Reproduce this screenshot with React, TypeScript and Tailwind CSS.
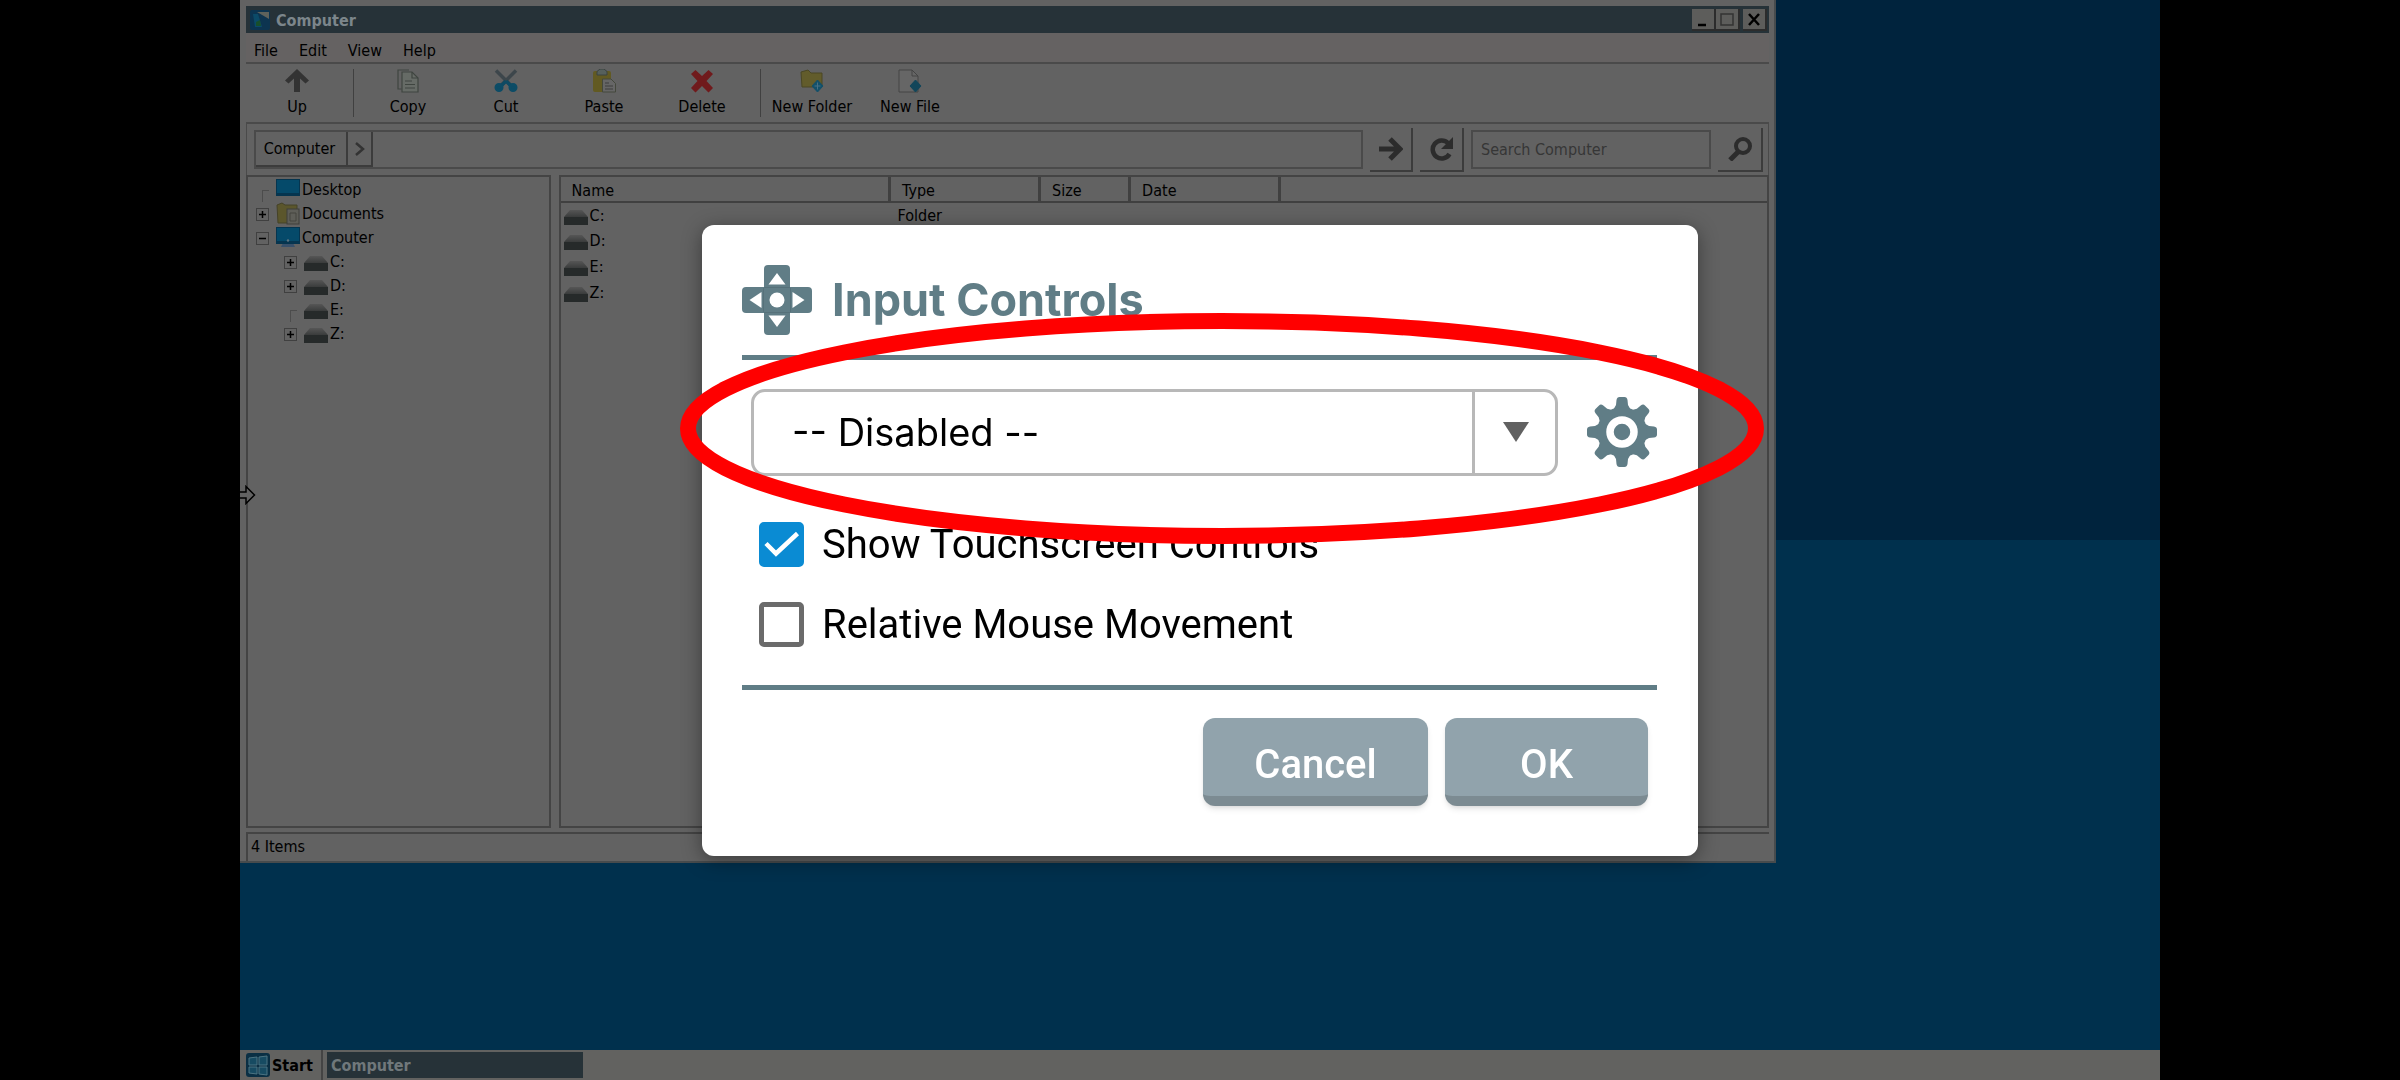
import { useState } from 'react';
import type { ReactNode } from 'react';

const DRIVES = ['C:', 'D:', 'E:', 'Z:'];
const MENUS = ['File', 'Edit', 'View', 'Help'];

const FILES = [
  { name: 'C:', type: 'Folder' },
  { name: 'D:', type: '' },
  { name: 'E:', type: '' },
  { name: 'Z:', type: '' },
];

const UpIcon = () => (
  <svg className="w-6 h-6" viewBox="0 0 24 24">
    <path d="M12 0 24 11.500 20.500 14.500 15 9.500V23H9V9.500L3.500 14.500 0 11.500Z" fill="#333" />
  </svg>
);

const CopyIcon = () => (
  <svg className="w-6 h-6" viewBox="0 0 24 24" fill="none" stroke="#3f4540" strokeWidth="1.2">
    <path d="M5.500 20H2V1h11" />
    <path d="M6 3h10l6 6v14H6Z" fill="#666b66" />
    <path d="M16 3v6h6M9 12h7M9 15.500h10M9 19h10" />
  </svg>
);

const CutIcon = () => (
  <svg className="w-6 h-6" viewBox="0 0 24 24" fill="none">
    <path d="M2 1.500 17 16.500M22 1.500 7 16.500" stroke="#3d464b" strokeWidth="3.500" />
    <path d="M12 12 5.500 18.500M12 12l6.500 6.500" stroke="#0d4a63" strokeWidth="3.500" />
    <circle cx="5" cy="18.500" r="3" fill="#0c4c66" stroke="#0c4c66" strokeWidth="3" />
    <circle cx="19" cy="18.500" r="3" fill="#0c4c66" stroke="#0c4c66" strokeWidth="3" />
  </svg>
);

const PasteIcon = () => (
  <svg className="w-6 h-6" viewBox="0 0 24 24">
    <rect x="1" y="2" width="18" height="21" rx="2" fill="#625a22" />
    <path d="M5 6V2.500L8 0h4l3 2.500V6Z" fill="#56605c" stroke="#3b4340" />
    <path d="M10.500 10H19l4.500 4.500V23h-13Z" fill="#666" stroke="#44483c" />
    <path d="M13 14h4M13 17h8M13 20h8" stroke="#3c3c3c" strokeWidth="1.200" />
  </svg>
);

const DeleteIcon = () => (
  <svg className="w-6 h-6" viewBox="0 0 24 24">
    <path d="M1 5 5.500 1 12 7 18.500 1 23 5 16.500 12 23 19 18.500 23.500 12 17 5.500 23.500 1 19 7.500 12Z" fill="#701a1c" />
  </svg>
);

const NewFolderIcon = () => (
  <svg className="w-6 h-6" viewBox="0 0 24 24">
    <path d="M1 3 8 1l3 3h11v14H2Z" fill="#625c2b" stroke="#4a4725" />
    <path d="m17.500 11 5.500 6-5.500 6-5.500-6Z" fill="#12506a" stroke="#12506a" strokeLinejoin="round" />
    <path d="M17.500 13.500v7M14.500 17h6" stroke="#467084" />
  </svg>
);

const NewFileIcon = () => (
  <svg className="w-6 h-6" viewBox="0 0 24 24">
    <path d="M1 1h13l6 6v16H1Z" fill="#666" stroke="#444" />
    <path d="M14 1v6h6" fill="none" stroke="#444" />
    <path d="m17.500 11 5.500 6-5.500 6-5.500-6Z" fill="#12465a" stroke="#12465a" strokeLinejoin="round" />
  </svg>
);

const MonitorIcon = ({ stand = false }: { stand?: boolean }) => (
  <svg className="w-6 h-6 shrink-0" viewBox="0 0 24 24">
    {stand && <path d="M7 17h10l2 4H5Z" fill="#38506a" />}
    <rect y="1" width="24" height="17" fill="#06354f" />
    <rect x="1" y="2" width="22" height="13" fill="#054a6a" />
    {stand && <circle cx="12" cy="14.500" r="1.200" fill="#5d7380" />}
  </svg>
);

const DocumentsIcon = () => (
  <svg className="w-6 h-6 shrink-0" viewBox="0 0 24 24">
    <path d="M1 3 6 1l3 2h12v18H2Z" fill="#5b562c" stroke="#454228" />
    <rect x="11" y="7" width="12" height="15" fill="#5e5e58" stroke="#3e3e3a" />
    <path d="M14 11h6v8h-6z" fill="none" stroke="#44443f" />
  </svg>
);

const DriveIcon = () => (
  <svg className="w-6 h-6 shrink-0" viewBox="0 0 24 24">
    <defs>
      <linearGradient id="driveTop" x1="0" y1="0" x2="0" y2="1">
        <stop offset="0" stopColor="#565656" />
        <stop offset="1" stopColor="#3a3c3c" />
      </linearGradient>
    </defs>
    <path d="M6 6h12l6 7H0Z" fill="url(#driveTop)" />
    <rect y="13" width="24" height="8" fill="#262a2a" />
  </svg>
);

const DpadIcon = () => (
  <svg className="w-[70px] h-[70px]" viewBox="0 0 70 70">
    <rect x="22" width="26" height="70" rx="4" fill="#607d86" />
    <rect y="22" width="70" height="26" rx="4" fill="#607d86" />
    <path d="M35 8l8.500 11.500h-17ZM35 62l8.500-11.500h-17ZM7.500 35 19.500 27v16ZM62.500 35 50.500 27v16Z" fill="#fff" />
    <path d="M22 22.500h26M22 47.500h26M21.500 23v24M48.500 23v24" stroke="#56717a" />
    <circle cx="35" cy="35" r="7.500" fill="#fff" />
  </svg>
);

const GearIcon = () => (
  <svg className="w-[70px] h-[70px]" viewBox="-35 -35 70 70">
    <g fill="#607d86">
      {[0, 45, 90, 135, 180, 225, 270, 315].map((angle) => (
        <path
          key={angle}
          transform={`rotate(${angle})`}
          d="M-10-20 -6-27 -5.500-32Q-5-35-2.500-35H2.500Q5-35 5.500-32L6-27 10-20Z"
        />
      ))}
      <circle r="25" />
    </g>
    <circle r="12" fill="#607d86" stroke="#fff" strokeWidth="7.500" />
  </svg>
);

const ToolButton = ({ icon, label }: { icon: ReactNode; label: string }) => (
  <button type="button" className="w-[98px] flex flex-col items-center gap-1 whitespace-nowrap">
    {icon}
    {label}
  </button>
);

const Expander = ({ open = false }: { open?: boolean }) => (
  <button
    type="button"
    aria-label={open ? 'Collapse' : 'Expand'}
    className="w-[13px] h-[13px] shrink-0 border border-[#404040] flex items-center justify-center"
  >
    <svg className="w-[9px] h-[9px]" viewBox="0 0 9 9" stroke="#000" strokeWidth="1.500">
      <path d={open ? 'M1 4.500h7' : 'M1 4.500h7M4.500 1v7'} />
    </svg>
  </button>
);

const Branch = () => (
  <span className="w-[13px] h-3 shrink-0 self-end flex justify-end">
    <span className="w-[7px] h-3 border-l border-t border-[#4c4c4c]" />
  </span>
);

const TreeItem = ({ toggle, icon, label, child = false }: { toggle: ReactNode; icon: ReactNode; label: string; child?: boolean }) => (
  <li className={child ? 'h-6 flex items-center pl-9' : 'h-6 flex items-center pl-2'}>
    {toggle}
    <span className="w-[7px]" />
    {icon}
    <span className="ml-[2px]">{label}</span>
  </li>
);

const FileManager = () => (
  <section className="w-4/5 bg-[#626262] border-r-2 border-b-2 border-[#474b4d] pt-[6px] pl-[6px] pr-[5px] text-black">
    <header className="h-[27px] bg-[#263238] flex items-center pl-1 pr-[2px]">
      <svg className="w-5 h-5" viewBox="0 0 20 20">
        <rect width="20" height="20" rx="2" fill="#0c3450" />
        <path d="M7 2h12v7Z" fill="#5d625c" />
        <path d="M3 4h5l4 13H5Z" fill="#0b4a68" />
        <path d="M6 12l4-2 1 6H6Z" fill="#174f2c" />
      </svg>
      <h1 className="ml-[6px] pt-[2px] flex-1 font-bold text-[#7c868b]">Computer</h1>
      <div className="flex">
        <button type="button" aria-label="Minimize" className="w-6 h-[22px] bg-[#5d5d5b] border-r-2 border-b-2 border-[#2c2c2c]">
          <svg className="w-full h-full" viewBox="0 0 22 20"><path d="M6 16h8" stroke="#000" strokeWidth="2.500" /></svg>
        </button>
        <button type="button" aria-label="Maximize" className="w-6 h-[22px] mr-[3px] bg-[#5d5d5b] border-r-2 border-b-2 border-[#2c2c2c]">
          <svg className="w-full h-full" viewBox="0 0 22 20"><path d="M5 5h12v11H5Z" stroke="#333" strokeWidth="1.500" fill="none" /></svg>
        </button>
        <button type="button" aria-label="Close" className="w-6 h-[22px] bg-[#5d5d5b] border-r-2 border-b-2 border-[#2c2c2c]">
          <svg className="w-full h-full" viewBox="0 0 22 20"><path d="m6 5 10 11M16 5 6 16" stroke="#000" strokeWidth="2.500" /></svg>
        </button>
      </div>
    </header>

    <nav className="h-[31px] bg-[#656262] border-b-2 border-[#4a4a4a] flex items-center gap-[21px] pl-2 pt-[6px]">
      {MENUS.map((menu) => (
        <button key={menu} type="button">{menu}</button>
      ))}
    </nav>

    <div className="h-[58px] flex items-center pl-[2px]">
      <ToolButton icon={<UpIcon />} label="Up" />
      <span className="w-px h-12 ml-[7px] mr-[5px] bg-[#404040]" />
      <ToolButton icon={<CopyIcon />} label="Copy" />
      <ToolButton icon={<CutIcon />} label="Cut" />
      <ToolButton icon={<PasteIcon />} label="Paste" />
      <ToolButton icon={<DeleteIcon />} label="Delete" />
      <span className="w-px h-12 ml-[9px] mr-[2px] bg-[#404040]" />
      <ToolButton icon={<NewFolderIcon />} label="New Folder" />
      <ToolButton icon={<NewFileIcon />} label="New File" />
    </div>

    <div className="h-[53px] border-t-2 border-x border-[#4a4a4a] flex items-center gap-[7px] pl-[7px] pr-[5px]">
      <div className="flex-1 h-[39px] border-2 border-[#4a4a4a] flex items-start">
        <button type="button" className="h-[35px] w-[92px] pr-[3px] border-r-2 border-b-2 border-[#3c3c3c]">Computer</button>
        <button type="button" aria-label="Show folders" className="h-[35px] w-[25px] border-r-2 border-b-2 border-[#3c3c3c] flex items-center justify-center">
          <svg className="w-3 h-4" viewBox="0 0 12 16"><path d="m2 2 7 6-7 6" fill="none" stroke="#333" strokeWidth="2.500" /></svg>
        </button>
      </div>
      <button type="button" aria-label="Go" className="w-[43px] h-[44px] border-r-2 border-b-2 border-[#3c3c3c] flex items-center justify-center">
        <svg className="w-6 h-6" viewBox="0 0 24 24"><path d="M0 12h21M11 2l10 10-10 10" fill="none" stroke="#2c2c2c" strokeWidth="5" /></svg>
      </button>
      <button type="button" aria-label="Refresh" className="w-[44px] h-[44px] border-r-2 border-b-2 border-[#3c3c3c] flex items-center justify-center">
        <svg className="w-6 h-6" viewBox="0 0 24 24">
          <path d="M19 6A9 9 0 1 0 20.500 17" fill="none" stroke="#2c2c2c" strokeWidth="4.500" />
          <path d="M24 0v12H12Z" fill="#2c2c2c" />
        </svg>
      </button>
      <input
        type="text"
        aria-label="Search Computer"
        placeholder="Search Computer"
        className="w-[240px] h-[39px] border-2 border-[#4a4a4a] pl-2 placeholder:text-[#363636] placeholder:opacity-100"
      />
      <button type="button" aria-label="Search" className="w-[45px] h-[44px] border-r-2 border-b-2 border-[#3c3c3c] flex items-center justify-center">
        <svg className="w-6 h-6" viewBox="0 0 24 24" fill="none" stroke="#2c2c2c">
          <circle cx="15" cy="9" r="7" strokeWidth="4" />
          <path d="m10 15-8 8" strokeWidth="5" />
        </svg>
      </button>
    </div>

    <div className="h-[653px] flex gap-2">
      <ul className="w-1/5 border-2 border-[#444] pt-px">
        <TreeItem toggle={<Branch />} icon={<MonitorIcon />} label="Desktop" />
        <TreeItem toggle={<Expander />} icon={<DocumentsIcon />} label="Documents" />
        <TreeItem toggle={<Expander open />} icon={<MonitorIcon stand />} label="Computer" />
        {DRIVES.map((drive) => (
          <TreeItem
            key={drive}
            child
            toggle={drive === 'E:' ? <Branch /> : <Expander />}
            icon={<DriveIcon />}
            label={drive}
          />
        ))}
      </ul>
      <div className="flex-1 border-2 border-[#444]">
        <table className="w-full table-fixed text-left">
          <colgroup>
            <col className="w-[329px]" />
            <col className="w-[150px]" />
            <col className="w-[90px]" />
            <col className="w-[150px]" />
            <col />
          </colgroup>
          <thead>
            <tr className="h-[25px] border-b-2 border-[#404040]">
              {['Name', 'Type', 'Size', 'Date'].map((column) => (
                <th key={column} className="border-r-3 border-[#404040] pl-[11px] pt-1 font-normal">{column}</th>
              ))}
              <th />
            </tr>
          </thead>
          <tbody>
            {FILES.map((file) => (
              <tr key={file.name} className="h-[26px]">
                <td className="pl-[3px]">
                  <span className="flex items-center gap-[2px]"><DriveIcon />{file.name}</span>
                </td>
                <td className="pl-2">{file.type}</td>
                <td />
                <td />
                <td />
              </tr>
            ))}
          </tbody>
        </table>
      </div>
    </div>

    <footer className="h-[29px] mt-1 border-t-2 border-l-2 border-[#444] pl-[3px] pb-[2px] flex items-center">4 Items</footer>
  </section>
);

const Taskbar = () => (
  <footer className="h-[30px] bg-[#626260] flex items-center pl-[6px] font-bold">
    <button type="button" className="h-full flex items-center gap-[2px] pr-2 border-r-2 border-[#444] text-black">
      <svg className="w-6 h-6" viewBox="0 0 24 24">
        <rect width="24" height="24" rx="3" fill="#0a2f44" />
        <path d="M3 5l8-1v8H3ZM13 4l8-1v9h-8ZM3 14h8v7l-8-1ZM13 14h8v8l-8-1Z" fill="#174b62" stroke="#4d7482" />
      </svg>
      <span className="pt-[2px]">Start</span>
    </button>
    <button type="button" className="ml-1 w-[256px] h-[26px] bg-[#263238] pl-1 pt-[2px] text-left text-[#70787b]">Computer</button>
  </footer>
);

type CheckRowProps = { label: string; checked: boolean; onChange: (checked: boolean) => void };

const CheckRow = ({ label, checked, onChange }: CheckRowProps) => (
  <label className="h-20 flex items-center gap-[18px] pl-[17px] text-[40px]">
    <span className="grid w-[45px] h-[45px]">
      <input
        type="checkbox"
        checked={checked}
        onChange={(e) => onChange(e.target.checked)}
        className="col-start-1 row-start-1 appearance-none rounded-[5px] border-5 border-[#6b6b6b] checked:border-[#0a8bd3] checked:bg-[#0a8bd3]"
      />
      {checked && (
        <svg className="col-start-1 row-start-1 pointer-events-none" viewBox="0 0 45 45">
          <path d="m7 21.500 10 10L38.500 11.500" fill="none" stroke="#fff" strokeWidth="4.500" />
        </svg>
      )}
    </span>
    {label}
  </label>
);

const InputControlsDialog = () => {
  const [showTouch, setShowTouch] = useState(true);
  const [relativeMouse, setRelativeMouse] = useState(false);

  return (
    <div className="fixed inset-0 flex items-center justify-center">
      <div
        role="dialog"
        aria-labelledby="dialog-title"
        className="relative w-[996px] max-w-full rounded-[12px] bg-white pl-10 pr-[41px] pt-10 pb-[50px] text-black shadow-[0_4px_20px_rgba(0,0,0,0.4)] font-['Roboto',sans-serif]"
      >
        <div className="flex items-center gap-5 pb-5 border-b-5 border-[#607d86]">
          <DpadIcon />
          <h2 id="dialog-title" className="font-['Inter',sans-serif] text-[45px] leading-[52px] font-bold text-[#607d86]">Input Controls</h2>
        </div>

        <div className="my-[29px] flex items-center justify-between pl-[9px]">
          <div className="grid w-[807px]">
            <select
              aria-label="Profile"
              className="col-start-1 row-start-1 h-[87px] appearance-none rounded-[14px] border-3 border-[#b8b8b8] bg-white pl-[38px] font-['Inter',sans-serif] text-[38px] leading-[48px]"
            >
              <option>-- Disabled --</option>
            </select>
            <span className="col-start-1 row-start-1 justify-self-end w-[86px] border-l-3 border-[#b8b8b8] pr-[2px] pointer-events-none flex items-center justify-center">
              <svg className="w-[26px] h-5" viewBox="0 0 26 20"><path d="M0 0h26L13 20Z" fill="#616161" /></svg>
            </span>
          </div>
          <button type="button" aria-label="Settings"><GearIcon /></button>
        </div>

        <CheckRow label="Show Touchscreen Controls" checked={showTouch} onChange={setShowTouch} />
        <CheckRow label="Relative Mouse Movement" checked={relativeMouse} onChange={setRelativeMouse} />

        <div className="mt-5 pt-7 pr-[9px] flex justify-end gap-[17px] border-t-5 border-[#607d86] text-[40px] font-medium text-white">
          <button type="button" className="w-[225px] h-[88px] pt-4 rounded-[12px] border-b-10 border-[#7c8b92] bg-[#91a3ac] shadow-md">Cancel</button>
          <button type="button" className="w-[203px] h-[88px] pt-4 rounded-[12px] border-b-10 border-[#7c8b92] bg-[#91a3ac] shadow-md">OK</button>
        </div>

        <svg
          className="absolute -left-[22px] top-[88px] w-[1084px] h-[231px] pointer-events-none"
          viewBox="0 0 1084 231"
          fill="none"
        >
          <ellipse cx="542" cy="115.500" rx="534" ry="107.500" stroke="#f00" strokeWidth="16" />
        </svg>
      </div>
    </div>
  );
};

export default function App() {
  return (
    <div className="min-h-screen bg-black flex justify-center text-[16px] leading-5 font-['DejaVu_Sans_Condensed','DejaVu_Sans',sans-serif]">
      <div className="relative w-4/5 min-h-screen flex flex-col bg-[linear-gradient(#00233d_50%,#00304d_50%)]">
        <main className="flex-1">
          <FileManager />
        </main>
        <Taskbar />
        <svg className="absolute left-0 top-[485px] w-4 h-5" viewBox="0 0 16 20">
          <path d="M0 7h6V1.500L14.500 10 6 18.500V13H0" fill="#626262" stroke="#000" strokeWidth="1.500" />
        </svg>
      </div>
      <InputControlsDialog />
    </div>
  );
}
